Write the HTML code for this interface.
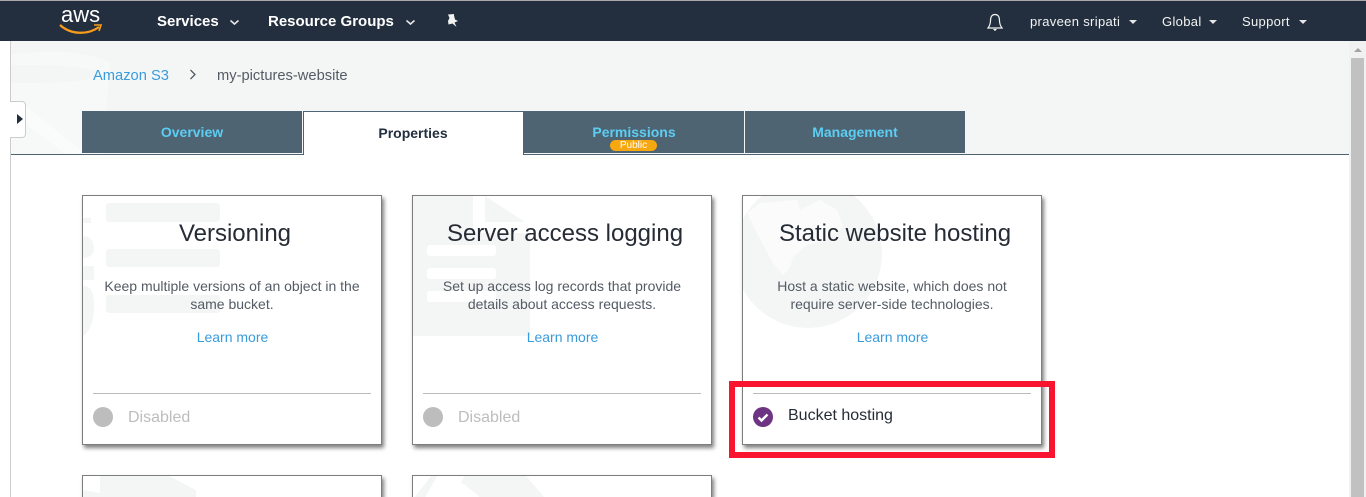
<!DOCTYPE html>
<html lang="en">
<head>
<meta charset="utf-8">
<title>my-pictures-website</title>
<style>
html,body{margin:0;padding:0;width:1366px;height:497px;overflow:hidden;background:#fff;font-family:"Liberation Sans",Arial,sans-serif;}
#w{position:relative;width:1366px;height:497px;overflow:hidden;background:#fff;}
.a{position:absolute;}
.t{position:absolute;white-space:nowrap;}
#top{left:0;top:0;width:1366px;height:41px;background:#232f3e;border-top:1px solid #aaa;box-sizing:border-box;}
.nb{color:#fff;font-weight:bold;font-size:15px;line-height:16px;top:14px;}
.nr{color:#f2f3f3;font-size:13px;letter-spacing:.33px;line-height:16px;top:14px;}
.tab{position:absolute;top:111px;height:42px;background:#4f6472;color:#5ccdf3;font-weight:bold;font-size:14px;text-align:center;line-height:42px;}
.card{position:absolute;width:300px;height:250px;box-sizing:border-box;border:1px solid #7d7d7d;background:#fff;box-shadow:2px 3px 4px rgba(0,0,0,.5);overflow:hidden;}
.card h3{position:absolute;left:0;width:298px;padding-left:6px;box-sizing:border-box;top:23px;margin:0;font-weight:normal;font-size:24px;line-height:30px;color:#262c35;text-align:center;white-space:nowrap;}
.card p{position:absolute;left:0;width:298px;top:81px;margin:0;font-size:14px;line-height:18px;color:#545b64;text-align:center;}
.card .lm{position:absolute;left:0;width:298px;top:133px;font-size:14px;line-height:16px;color:#3a9bdc;text-align:center;padding-left:1px;box-sizing:border-box;}
.card .hr{position:absolute;left:10px;width:278px;top:197px;height:1px;background:#bbb;}
.card .dot{position:absolute;left:10px;top:211px;width:20px;height:20px;border-radius:50%;background:#bdbdbd;}
.card .st{position:absolute;left:45px;top:212px;font-size:16px;line-height:20px;color:#bdbdbd;white-space:nowrap;}
.card svg.bg{position:absolute;left:0;top:0;}
</style>
</head>
<body>
<div id="w">
<!-- content header background -->
<div class="a" style="left:11px;top:41px;width:1338px;height:113px;background:#f4f6f6;"></div>
<svg class="a" style="left:11px;top:41px;" width="110" height="113" viewBox="0 0 110 113">
<path d="M0 14 C30 8 80 10 99 22 L92 113 H0Z" fill="#f7f8f8"/>
<ellipse cx="20" cy="33" rx="70" ry="9" fill="#f4f6f6"/>
<path d="M16 66 L75 113 H55 L8 78Z" fill="#fafbfb"/>
</svg>
<div class="a" style="left:11px;top:154px;width:1338px;height:1px;background:#4f6472;"></div>
<div class="a" style="left:10px;top:41px;width:1px;height:456px;background:#ccc;"></div>

<!-- collapse handle -->
<div class="a" style="left:10px;top:101px;width:16px;height:37px;box-sizing:border-box;background:#fff;border:1px solid #ccc;border-left:0;border-radius:0 4px 4px 0;"></div>
<div class="a" style="left:17px;top:114px;width:0;height:0;border-left:6px solid #232f3e;border-top:5px solid transparent;border-bottom:5px solid transparent;"></div>

<!-- nav -->
<div class="a" id="top"></div>
<div class="t" style="left:61px;top:3px;color:#fff;font-size:22px;line-height:24px;">aws</div>
<svg class="a" style="left:58px;top:22px;" width="46" height="13" viewBox="0 0 46 13"><path d="M2 3 C13 13 30 13 41 5" fill="none" stroke="#f79c1d" stroke-width="2.2"/><path d="M36 3 L43 3 L41 9" fill="none" stroke="#f79c1d" stroke-width="1.6"/></svg>
<div class="t nb" style="left:157px;">Services</div>
<svg class="a" style="left:229px;top:19px;" width="11" height="7"><path d="M1.5 1.5 L5.5 5 L9.5 1.5" fill="none" stroke="#e6e6e6" stroke-width="1.6"/></svg>
<div class="t nb" style="left:268px;">Resource Groups</div>
<svg class="a" style="left:405px;top:19px;" width="11" height="7"><path d="M1.5 1.5 L5.5 5 L9.5 1.5" fill="none" stroke="#e6e6e6" stroke-width="1.6"/></svg>
<svg class="a" style="left:445px;top:13px;" width="15" height="15" viewBox="0 0 15 15"><path d="M3 1.500 L9 1 L9 2.500 L10 6.500 L13 8 L9.500 9.500 L11.500 14 L7.500 10.500 L3.500 11.500 L3 8 L4.500 5 Z" fill="#f2f3f3"/></svg>
<svg class="a" style="left:985px;top:12px;" width="20" height="20" viewBox="0 0 20 20"><path d="M10 2.500 C6.500 2.500 5.500 5.500 5.500 8.500 C5.500 12 4.500 14 3 16 H17 C15.500 14 14.500 12 14.500 8.500 C14.500 5.500 13.500 2.500 10 2.500Z" fill="none" stroke="#f2f3f3" stroke-width="1.200"/><path d="M8 17 H12 L10.500 18.800 H9.500Z" fill="#f2f3f3"/></svg>
<div class="t nr" style="left:1030px;">praveen sripati</div>
<div class="a" style="left:1129px;top:20px;width:0;height:0;border-top:4px solid #e6e6e6;border-left:4px solid transparent;border-right:4px solid transparent;"></div>
<div class="t nr" style="left:1162px;">Global</div>
<div class="a" style="left:1209px;top:20px;width:0;height:0;border-top:4px solid #e6e6e6;border-left:4px solid transparent;border-right:4px solid transparent;"></div>
<div class="t nr" style="left:1242px;">Support</div>
<div class="a" style="left:1299px;top:20px;width:0;height:0;border-top:4px solid #e6e6e6;border-left:4px solid transparent;border-right:4px solid transparent;"></div>

<!-- breadcrumb -->
<div class="t" style="left:93px;top:67px;font-size:14.700px;line-height:18px;color:#3a9bdc;">Amazon S3</div>
<svg class="a" style="left:189px;top:69px;" width="8" height="11"><path d="M1.500 1 L6 5.500 L1.500 10" fill="none" stroke="#545b64" stroke-width="1.300"/></svg>
<div class="t" style="left:217px;top:67px;font-size:14.700px;line-height:18px;color:#545b64;">my-pictures-website</div>

<!-- tabs -->
<div class="tab" style="left:82px;width:220px;">Overview</div>
<div class="a" style="left:303px;top:111px;width:221px;height:44px;box-sizing:border-box;background:#fff;border:1px solid #4f6472;border-bottom:0;"></div>
<div class="t" style="left:303px;width:220px;top:125px;text-align:center;font-size:14px;font-weight:bold;line-height:16px;color:#232f3e;">Properties</div>
<div class="tab" style="left:524px;width:220px;">Permissions</div>
<div class="t" style="left:610px;top:140px;width:47px;height:11px;border-radius:6px;background:#f7a70f;color:#fff;font-size:10px;line-height:11px;text-align:center;">Public</div>
<div class="tab" style="left:745px;width:220px;">Management</div>

<!-- cards row 1 -->
<div class="card" style="left:82px;top:195px;">
<svg class="bg" width="298" height="248"><g fill="#f4f6f6"><rect x="23" y="7" width="114" height="19" rx="3"/><rect x="23" y="53" width="114" height="18" rx="3"/><rect x="23" y="99" width="114" height="18" rx="3"/><rect x="0" y="22" width="8" height="5"/><path d="M0 40 C8 40 11 46 11 53 C11 60 4 62 0 62Z"/><rect x="0" y="70" width="11" height="14"/><path d="M0 90 C8 90 11 96 11 110 C11 130 4 138 0 140Z"/></g></svg>
<h3>Versioning</h3>
<p>Keep multiple versions of an object in the<br>same bucket.</p>
<div class="lm">Learn more</div>
<div class="hr"></div><div class="dot"></div><div class="st">Disabled</div>
</div>

<div class="card" style="left:412px;top:195px;">
<svg class="bg" width="298" height="248"><path d="M0 0 H60 V37 H117 V140 H0Z" fill="#f4f6f6"/><path d="M72 0 L112 26 H72Z" fill="#f4f6f6"/><g fill="#fff"><rect x="14" y="49" width="69" height="11" rx="3"/><rect x="14" y="72" width="69" height="11" rx="3"/><rect x="14" y="95" width="69" height="11" rx="3"/></g></svg>
<h3>Server access logging</h3>
<p>Set up access log records that provide<br>details about access requests.</p>
<div class="lm">Learn more</div>
<div class="hr"></div><div class="dot"></div><div class="st">Disabled</div>
</div>

<div class="card" style="left:742px;top:195px;">
<svg class="bg" width="298" height="248"><circle cx="65" cy="58" r="74" fill="#f4f6f6"/><path d="M4 17 L17 7 L54 4 L57 14 L77 4 L94 14 L100 31 L84 44 L64 49 L50 61 L47 71 L40 79 L30 67 L14 37Z" fill="#fbfbfb"/></svg>
<h3>Static website hosting</h3>
<p>Host a static website, which does not<br>require server-side technologies.</p>
<div class="lm">Learn more</div>
<div class="hr"></div>
<svg class="a" style="left:10px;top:211px;" width="20" height="20" viewBox="0 0 20 20"><circle cx="10" cy="10" r="10" fill="#6c3483"/><path d="M5.500 10.500 L8.500 13.500 L14.500 7.500" fill="none" stroke="#fff" stroke-width="2.400"/></svg>
<div class="st" style="color:#262c35;top:210px;">Bucket hosting</div>
</div>

<!-- cards row 2 -->
<div class="card" style="left:82px;top:475px;height:22px;border-bottom:0;">
<svg class="bg" width="298" height="22"><path d="M0 14 L17 17 V0 H86 L113 14 V22 H0Z" fill="#f4f6f6"/></svg>
</div>
<div class="card" style="left:412px;top:475px;height:22px;border-bottom:0;">
<svg class="bg" width="298" height="22"><path d="M1 22 L18 0 H113 L132 22Z" fill="#f4f6f6"/><path d="M24 0 H52 L48 6 L56 12 L68 22 H12Z" fill="#fff"/></svg>
</div>

<!-- red highlight -->
<div class="a" style="left:729px;top:381px;width:326px;height:77px;box-sizing:border-box;border:6px solid #f9152f;"></div>

<!-- scrollbar -->
<div class="a" style="left:1349px;top:41px;width:17px;height:456px;background:#f1f1f1;"></div>
<div class="a" style="left:1354px;top:48px;width:0;height:0;border-bottom:4px solid #a3a3a3;border-left:4px solid transparent;border-right:4px solid transparent;"></div>
<div class="a" style="left:1351px;top:58px;width:13px;height:439px;background:#c1c1c1;"></div>
</div>
</body>
</html>
